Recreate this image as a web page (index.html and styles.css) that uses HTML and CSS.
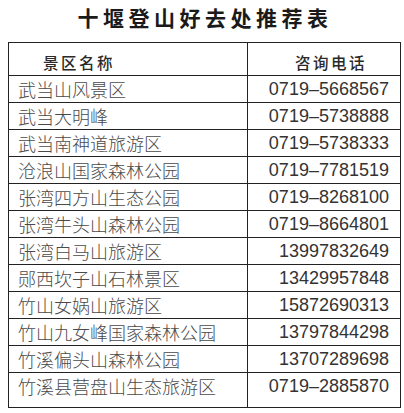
FILE: index.html
```html
<!DOCTYPE html>
<html lang="zh">
<head>
<meta charset="utf-8">
<link rel="stylesheet" href="styles.css">
</head>
<body>
<div class="page">
  <h1 class="title">十堰登山好去处推荐表</h1>
  <table class="tbl">
    <colgroup><col class="col-name"><col class="col-tel"></colgroup>
    <thead>
      <tr><th class="c-name">景区名称</th><th class="c-tel">咨询电话</th></tr>
    </thead>
    <tbody>
      <tr><td class="c-name">武当山风景区</td><td class="c-tel">0719–5668567</td></tr>
      <tr><td class="c-name">武当大明峰</td><td class="c-tel">0719–5738888</td></tr>
      <tr><td class="c-name">武当南神道旅游区</td><td class="c-tel">0719–5738333</td></tr>
      <tr><td class="c-name">沧浪山国家森林公园</td><td class="c-tel">0719–7781519</td></tr>
      <tr><td class="c-name">张湾四方山生态公园</td><td class="c-tel">0719–8268100</td></tr>
      <tr><td class="c-name">张湾牛头山森林公园</td><td class="c-tel">0719–8664801</td></tr>
      <tr><td class="c-name">张湾白马山旅游区</td><td class="c-tel">13997832649</td></tr>
      <tr><td class="c-name">郧西坎子山石林景区</td><td class="c-tel">13429957848</td></tr>
      <tr><td class="c-name">竹山女娲山旅游区</td><td class="c-tel">15872690313</td></tr>
      <tr><td class="c-name">竹山九女峰国家森林公园</td><td class="c-tel">13797844298</td></tr>
      <tr><td class="c-name">竹溪偏头山森林公园</td><td class="c-tel">13707289698</td></tr>
      <tr class="last"><td class="c-name">竹溪县营盘山生态旅游区</td><td class="c-tel">0719–2885870</td></tr>
    </tbody>
  </table>
</div>
</body>
</html>
```
FILE: styles.css
```css
html, body {
  margin: 0;
  padding: 0;
  background: #ffffff;
}
.page {
  width: 404px;
  height: 413px;
  padding: 0 4px 0 8px;
  box-sizing: border-box;
  font-family: "Noto Sans CJK SC", "Liberation Sans", sans-serif;
}
.title {
  margin: 0;
  height: 42px;
  line-height: 35px;
  text-align: center;
  font-size: 21px;
  font-weight: 700;
  letter-spacing: 4.5px;
  color: #1a1a1a;
  padding-left: 2px;
}
.tbl {
  width: 392px;
  border-collapse: collapse;
  table-layout: fixed;
}
.col-name { width: 239px; }
.col-tel { width: 153px; }
.tbl th, .tbl td {
  border: 1.5px solid #222;
  padding: 0;
  white-space: nowrap;
  overflow: hidden;
}
.tbl th {
  height: 29px;
  font-size: 15.5px;
  font-weight: 500;
  letter-spacing: 2.5px;
  color: #2a2a2a;
  line-height: 20px;
  vertical-align: bottom;
  padding-bottom: 3px;
  text-align: left;
}
.tbl th.c-name {
  padding-left: 34px;
}
.tbl th.c-tel {
  padding-left: 47px;
}
.tbl td {
  height: 26px;
  line-height: 24px;
  color: #4a4a4a;
}
.tbl td.c-name {
  font-size: 18px;
  font-weight: 300;
  padding-left: 9px;
}
.tbl td.c-tel {
  font-family: "Liberation Sans", sans-serif;
  font-size: 18px;
  text-align: right;
  padding-right: 11px;
  color: #333;
}
.tbl tr.last td {
  height: 33px;
  vertical-align: top;
  padding-top: 1px;
}
```
